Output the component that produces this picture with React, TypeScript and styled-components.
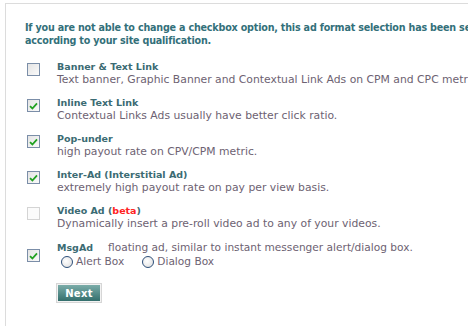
import styled, { createGlobalStyle } from "styled-components";

interface IOption
{
    title: string;
    beta?: boolean;
    desc: string;
    checked: boolean;
    disabled?: boolean;
}

const options: IOption[] = [
    { title: "Banner & Text Link", desc: "Text banner, Graphic Banner and Contextual Link Ads on CPM and CPC metric.", checked: false },
    { title: "Inline Text Link", desc: "Contextual Links Ads usually have better click ratio.", checked: true },
    { title: "Pop-under", desc: "high payout rate on CPV/CPM metric.", checked: true },
    { title: "Inter-Ad (Interstitial Ad)", desc: "extremely high payout rate on pay per view basis.", checked: true },
    { title: "Video Ad", beta: true, desc: "Dynamically insert a pre-roll video ad to any of your videos.", checked: false, disabled: true },
];

const GlobalStyle = createGlobalStyle`
    html, body {
        margin: 0;
        padding: 0;
        background: #ffffff;
        overflow: hidden;
    }
    body {
        font-family: "DejaVu Sans", Verdana, sans-serif;
    }
`

function CheckBox(props: { checked: boolean; disabled?: boolean })
{
    return (
        <Box $disabled={props.disabled}>
            {props.checked && (
                <svg width="9" height="8" viewBox="0 0 9 8">
                    <path d="M1 4.2 L3.4 6.5 L8 1.4" fill="none" stroke="#21a121" strokeWidth="1.8" />
                </svg>
            )}
        </Box>
    )
}

function App()
{
    return (
        <>
            <GlobalStyle />
            <Panel>
                <Notice>
                    If you are not able to change a checkbox option, this ad format selection has been selected
                    <br />
                    according to your site qualification.
                </Notice>
                <List>
                    {options.map((o) => (
                        <Row key={o.title}>
                            <CheckCell>
                                <CheckBox checked={o.checked} disabled={o.disabled} />
                            </CheckCell>
                            <div>
                                <Title>
                                    {o.title}
                                    {o.beta && <> (<Beta>beta</Beta>)</>}
                                </Title>
                                <Desc>{o.desc}</Desc>
                            </div>
                        </Row>
                    ))}
                    <Row $center>
                        <CheckCell>
                            <CheckBox checked />
                        </CheckCell>
                        <div>
                            <TitleLine>
                                <Title as="span">MsgAd</Title>
                                <InlineDesc>floating ad, similar to instant messenger alert/dialog box.</InlineDesc>
                            </TitleLine>
                            <RadioLine>
                                <RadioLabel><Radio />Alert Box</RadioLabel>
                                <RadioLabel><Radio />Dialog Box</RadioLabel>
                            </RadioLine>
                        </div>
                    </Row>
                </List>
                <NextButton>Next</NextButton>
            </Panel>
        </>
    )
}


const Panel = styled.div`
    margin: 3px 0 0 5px;
    border-top: 1px solid #dcdcdc;
    border-left: 1px solid #dcdcdc;
    padding: 17px 0 10px 19px;
    white-space: nowrap;
    height: 330px;
    box-sizing: border-box;
`
const Notice = styled.div`
    font-size: 9.6px;
    letter-spacing: -0.2px;
    font-weight: bold;
    line-height: 13px;
    color: #33707a;
`
const List = styled.div`
    margin-top: 14px;
    display: flex;
    flex-direction: column;
    gap: 11px;
`
const Row = styled.div<{ $center?: boolean }>`
    display: flex;
    align-items: ${(p) => (p.$center ? "center" : "flex-start")};
`
const CheckCell = styled.div`
    flex: 0 0 32px;
    padding-left: 2px;
    padding-top: 2px;
    box-sizing: border-box;
`
const Box = styled.div<{ $disabled?: boolean }>`
    width: 11px;
    height: 11px;
    border: 1px solid ${(p) => (p.$disabled ? "#d4d4d4" : "#7b8ea8")};
    background: ${(p) => (p.$disabled ? "#fbfbfb" : "linear-gradient(135deg, #e4e4e4, #fafafa)")};
    display: flex;
    align-items: center;
    justify-content: center;
`
const Title = styled.div`
    font-size: 9.5px;
    font-weight: bold;
    line-height: 12px;
    color: #3b6b73;
`
const Beta = styled.span`
    color: #ff2222;
`
const Desc = styled.div`
    font-size: 10.8px;
    line-height: 13px;
    color: #6d6272;
`
const TitleLine = styled.div`
    display: flex;
    align-items: baseline;
    gap: 15px;
    line-height: 13px;
`
const InlineDesc = styled.span`
    font-size: 10.6px;
    color: #6d6272;
`
const RadioLine = styled.div`
    display: flex;
    gap: 18px;
    padding-left: 4px;
    margin-top: 1px;
`
const RadioLabel = styled.span`
    display: flex;
    align-items: center;
    gap: 3px;
    font-size: 10.6px;
    line-height: 13px;
    color: #6d6272;
`
const Radio = styled.span`
    width: 10px;
    height: 10px;
    border-radius: 50%;
    border: 1px solid #2d4f7a;
    background: radial-gradient(circle at 40% 40%, #ffffff, #dcdcdc);
    display: inline-block;
`
const NextButton = styled.button`
    margin: 15px 0 0 31px;
    width: 46px;
    height: 20px;
    padding: 0;
    border: 1px solid #d6d6d6;
    box-shadow: inset 0 0 0 1px #f2f2f2;
    background: linear-gradient(#7fb0ac, #2f6b69);
    color: #ffffff;
    font-family: "DejaVu Sans", Verdana, sans-serif;
    font-size: 10px;
    font-weight: bold;
    letter-spacing: 0.3px;
    cursor: pointer;
`


export default App;
